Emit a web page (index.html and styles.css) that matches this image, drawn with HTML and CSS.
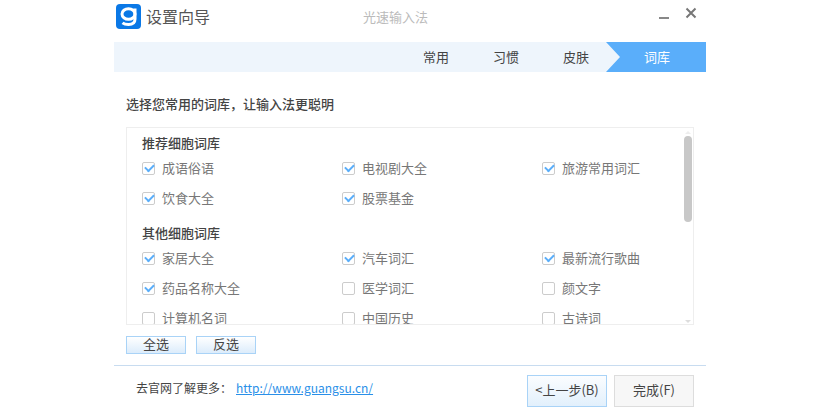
FILE: index.html
```html
<!DOCTYPE html>
<html lang="zh-CN">
<head>
<meta charset="utf-8">
<title>设置向导</title>
<link rel="stylesheet" href="styles.css">
</head>
<body>
<div class="window">
  <header class="titlebar">
    <svg class="logo" width="25" height="25" viewBox="0 0 25 25"><rect width="25" height="25" rx="4" fill="#0a78e6"/><ellipse cx="12.500" cy="10" rx="6.500" ry="5.300" fill="none" stroke="#fff" stroke-width="3"/><path d="M19 4.500V15C19 18.800 16.200 20.500 12.500 20.500C10 20.500 8 20 6.500 18.800" fill="none" stroke="#fff" stroke-width="3"/></svg>
    <span class="wizard">设置向导</span>
    <span class="product">光速输入法</span>
    <div class="controls">
      <svg width="12" height="12" viewBox="0 0 12 12"><rect x="1" y="10" width="10" height="2" fill="#888"/></svg>
      <svg width="12" height="12" viewBox="0 0 12 12"><path d="M1.500 1.500L10.500 10.500M10.500 1.500L1.500 10.500" stroke="#777" stroke-width="2"/></svg>
    </div>
  </header>
  <nav class="steps">
    <span class="step">常用</span>
    <span class="step">习惯</span>
    <span class="step">皮肤</span>
    <span class="step active">词库</span>
  </nav>
  <main class="content">
    <h1 class="heading">选择您常用的词库，让输入法更聪明</h1>
    <div class="listbox">
      <h2 class="group">推荐细胞词库</h2>
      <div class="grid">
        <label class="item"><span class="box on"></span>成语俗语</label>
        <label class="item"><span class="box on"></span>电视剧大全</label>
        <label class="item"><span class="box on"></span>旅游常用词汇</label>
        <label class="item"><span class="box on"></span>饮食大全</label>
        <label class="item"><span class="box on"></span>股票基金</label>
      </div>
      <h2 class="group second">其他细胞词库</h2>
      <div class="grid">
        <label class="item"><span class="box on"></span>家居大全</label>
        <label class="item"><span class="box on"></span>汽车词汇</label>
        <label class="item"><span class="box on"></span>最新流行歌曲</label>
        <label class="item"><span class="box on"></span>药品名称大全</label>
        <label class="item"><span class="box"></span>医学词汇</label>
        <label class="item"><span class="box"></span>颜文字</label>
        <label class="item"><span class="box"></span>计算机名词</label>
        <label class="item"><span class="box"></span>中国历史</label>
        <label class="item"><span class="box"></span>古诗词</label>
      </div>
      <span class="arrow up"></span>
      <span class="thumb"></span>
      <span class="arrow down"></span>
    </div>
    <div class="selectors">
      <button class="small">全选</button>
      <button class="small">反选</button>
    </div>
  </main>
  <footer class="footer">
    <span class="more">去官网了解更多：</span>
    <a class="link" href="#">http://www.guangsu.cn/</a>
    <button class="big primary">&lt;上一步(B)</button>
    <button class="big">完成(F)</button>
  </footer>
</div>
</body>
</html>
```
FILE: styles.css
```css
* { box-sizing: border-box; }
html, body { margin: 0; padding: 0; background: #fff; }
body {
  width: 820px;
  height: 410px;
  overflow: hidden;
  font-family: "Noto Sans CJK SC", "Liberation Sans", sans-serif;
  font-size: 13px;
  color: #444;
}
.window { width: 592px; margin-left: 114px; }

.titlebar { display: flex; align-items: center; height: 42px; padding: 2px 0 12px 2px; position: relative; }
.logo { flex: none; }
.wizard { font-size: 16px; line-height: 24px; color: #555; margin-left: 5px; width: 217px; }
.product { font-size: 13px; line-height: 24px; color: #bbb; padding-top: 2px; }
.controls { display: flex; gap: 15px; margin-left: auto; margin-right: 9px; margin-top: -6px; }

.steps { display: flex; justify-content: flex-end; align-items: stretch; height: 30px; background: #eef5fc; }
.step { width: 70px; display: flex; align-items: center; justify-content: center; color: #444; line-height: 30px; }
.step.active {
  width: 100px;
  margin-left: -5px;
  color: #fff;
  background: #5aaefa;
  clip-path: polygon(0 0, 100% 0, 100% 100%, 0 100%, 14px 50%);
  padding-left: 2px;
}

.content { padding: 0 12px; }
.heading { margin: 22px 0 14px; font-size: 13px; font-weight: 500; line-height: 19px; color: #444; }
.listbox { position: relative; height: 198px; border: 1px solid #eee; overflow: hidden; padding: 5px 0 0 15px; }
.group { margin: 0; font-size: 13px; font-weight: 500; line-height: 20px; color: #444; }
.group.second { margin-top: 10px; }
.grid { display: grid; grid-template-columns: repeat(3, 200px); grid-auto-rows: 30px; }
.item { display: flex; align-items: center; gap: 7px; color: #777; line-height: 30px; white-space: nowrap; }
.box { width: 13px; height: 13px; flex: none; border: 1px solid #ccc; border-radius: 2px; background: #fff; position: relative; }
.box.on::after {
  content: "";
  position: absolute;
  left: 2px;
  top: 1px;
  width: 7px;
  height: 4px;
  border-left: 2px solid #5aaefa;
  border-bottom: 2px solid #5aaefa;
  transform: rotate(-45deg);
}
.thumb { position: absolute; left: 557px; top: 8px; width: 8px; height: 86px; border-radius: 4px; background: #c8c8c8; }
.arrow { position: absolute; left: 558px; width: 0; height: 0; border-left: 3px solid transparent; border-right: 3px solid transparent; }
.arrow.up { top: 3px; border-bottom: 3px solid #eee; }
.arrow.down { top: 192px; border-top: 3px solid #ddd; }

.selectors { display: flex; gap: 10px; margin-top: 11px; }
.small {
  width: 60px;
  height: 18px;
  padding: 0 0 2px;
  border: 1px solid #a9d3f7;
  background: linear-gradient(#fff, #dcecfb);
  font: inherit;
  font-size: 13px;
  line-height: 14px;
  color: #444;
}

.footer {
  display: flex;
  align-items: center;
  margin-top: 11px;
  height: 45px;
  padding: 8px 12px 3px 22px;
  border-top: 1px solid #c8dcf0;
}
.more { font-size: 12px; color: #444; width: 100px; white-space: nowrap; margin-bottom: 7px; }
.link { font-size: 12px; color: #2a8fe8; text-decoration: underline; width: 291px; white-space: nowrap; margin-bottom: 7px; }
.big {
  width: 80px;
  height: 32px;
  padding: 0 0 2px;
  margin-right: 7px;
  border: 1px solid #ddd;
  background: #f7f7f7;
  font: inherit;
  font-size: 13px;
  color: #444;
}
.big:last-child { margin-right: 0; }
.big.primary { border-color: #a9d3f7; background: linear-gradient(#fbfdff, #e2f0fc); }
```
